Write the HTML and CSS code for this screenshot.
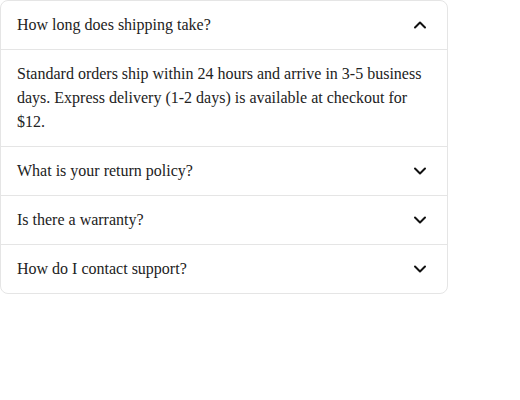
FILE: index.html
```html
<!DOCTYPE html>
<html>
<head>
<meta charset="utf-8">
<link rel="stylesheet" href="styles.css">
</head>
<body>
<div class="faq">
  <div class="item open">
    <div class="q"><span>How long does shipping take?</span>
      <svg class="chev" viewBox="0 0 24 24"><path d="m7 14.5 5-5 5 5"/></svg>
    </div>
    <div class="a">Standard orders ship within 24 hours and arrive in 3-5 business days. Express delivery (1-2 days) is available at checkout for $12.</div>
  </div>
  <div class="item">
    <div class="q"><span>What is your return policy?</span>
      <svg class="chev" viewBox="0 0 24 24"><path d="m7 9.5 5 5 5-5"/></svg>
    </div>
  </div>
  <div class="item">
    <div class="q"><span>Is there a warranty?</span>
      <svg class="chev" viewBox="0 0 24 24"><path d="m7 9.5 5 5 5-5"/></svg>
    </div>
  </div>
  <div class="item">
    <div class="q"><span>How do I contact support?</span>
      <svg class="chev" viewBox="0 0 24 24"><path d="m7 9.5 5 5 5-5"/></svg>
    </div>
  </div>
</div>
</body>
</html>
```
FILE: styles.css
```css
body {
  margin: 0;
  font-family: "Liberation Serif", "Times New Roman", serif;
  font-size: 16px;
  line-height: 24px;
  color: #222;
  background: #fff;
}
.faq {
  width: 446px;
  border: 1px solid #e5e5e5;
  border-radius: 8px;
}
.item + .item {
  border-top: 1px solid #e5e5e5;
}
.q {
  display: flex;
  align-items: center;
  justify-content: space-between;
  padding: 12px 15px 12px 16px;
}
.chev {
  display: block;
  width: 24px;
  height: 24px;
  fill: none;
  stroke: #111;
  stroke-width: 2;
  stroke-linecap: round;
  stroke-linejoin: round;
}
.a {
  border-top: 1px solid #e5e5e5;
  padding: 12px 16px;
}
```
